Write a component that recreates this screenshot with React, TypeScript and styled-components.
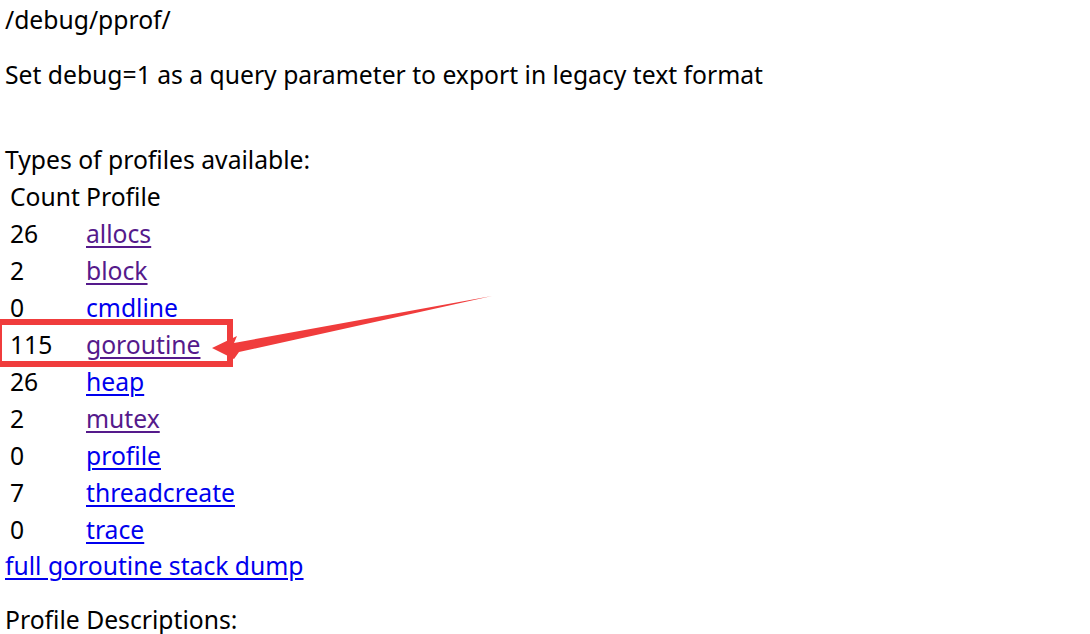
import React from "react";
import styled, { createGlobalStyle } from "styled-components";

const Global = createGlobalStyle`
  html, body { margin: 0; padding: 0; background: #ffffff; }
  body { font-family: "Noto Sans", "Open Sans", sans-serif; color: #000; }
`;

const Page = styled.div`
  position: relative;
  width: 1090px;
  height: 634px;
  overflow: hidden;
  padding: 4px 0 0 5px;
  box-sizing: border-box;
  font-size: 24.7px;
`;

const Line = styled.div<{ $mt?: number }>`
  height: 32px;
  line-height: 32px;
  margin-top: ${(p) => p.$mt ?? 0}px;
  white-space: nowrap;
`;

const Table = styled.div`
  display: grid;
  grid-template-columns: 81px auto;
  grid-auto-rows: 37px;
  align-items: center;
  margin-top: 2.5px;
  justify-content: start;
`;

const Cell = styled.div`
  padding-left: 5px;
  line-height: 32px;
  white-space: nowrap;
`;

const LinkCell = styled.div`
  line-height: 32px;
  white-space: nowrap;
`;

const Link = styled.a<{ $visited?: boolean }>`
  color: ${(p) => (p.$visited ? "#551a8b" : "#0000ee")};
  text-decoration: underline;
  text-underline-offset: 3px;
  text-decoration-thickness: 2px;
`;

const Overlay = styled.svg`
  position: absolute;
  left: 0;
  top: 0;
  pointer-events: none;
`;

const rows: { count: string; name: string; visited: boolean }[] = [
  { count: "26", name: "allocs", visited: true },
  { count: "2", name: "block", visited: true },
  { count: "0", name: "cmdline", visited: false },
  { count: "115", name: "goroutine", visited: true },
  { count: "26", name: "heap", visited: false },
  { count: "2", name: "mutex", visited: true },
  { count: "0", name: "profile", visited: false },
  { count: "7", name: "threadcreate", visited: false },
  { count: "0", name: "trace", visited: false },
];

export default function App() {
  return (
    <>
      <Global />
      <Page>
        <Line>/debug/pprof/</Line>
        <Line $mt={23}>Set debug=1 as a query parameter to export in legacy text format</Line>
        <Line $mt={53}>Types of profiles available:</Line>
        <Table>
          <Cell>Count</Cell>
          <LinkCell>Profile</LinkCell>
          {rows.map((r) => (
            <React.Fragment key={r.name}>
              <Cell>{r.count}</Cell>
              <LinkCell>
                <Link href="#" $visited={r.visited}>
                  {r.name}
                </Link>
              </LinkCell>
            </React.Fragment>
          ))}
        </Table>
        <Line $mt={1.5}>
          <Link href="#">full goroutine stack dump</Link>
        </Line>
        <Line $mt={22}>Profile Descriptions:</Line>
        <Overlay width="1090" height="634" viewBox="0 0 1090 634">
          <rect x="-1" y="322" width="231" height="42" fill="none" stroke="#f03c3c" strokeWidth="6" />
          <polygon
            points="212,348 237,336 234,343 492,296 239,352 234,359"
            fill="#f03c3c"
          />
        </Overlay>
      </Page>
    </>
  );
}
